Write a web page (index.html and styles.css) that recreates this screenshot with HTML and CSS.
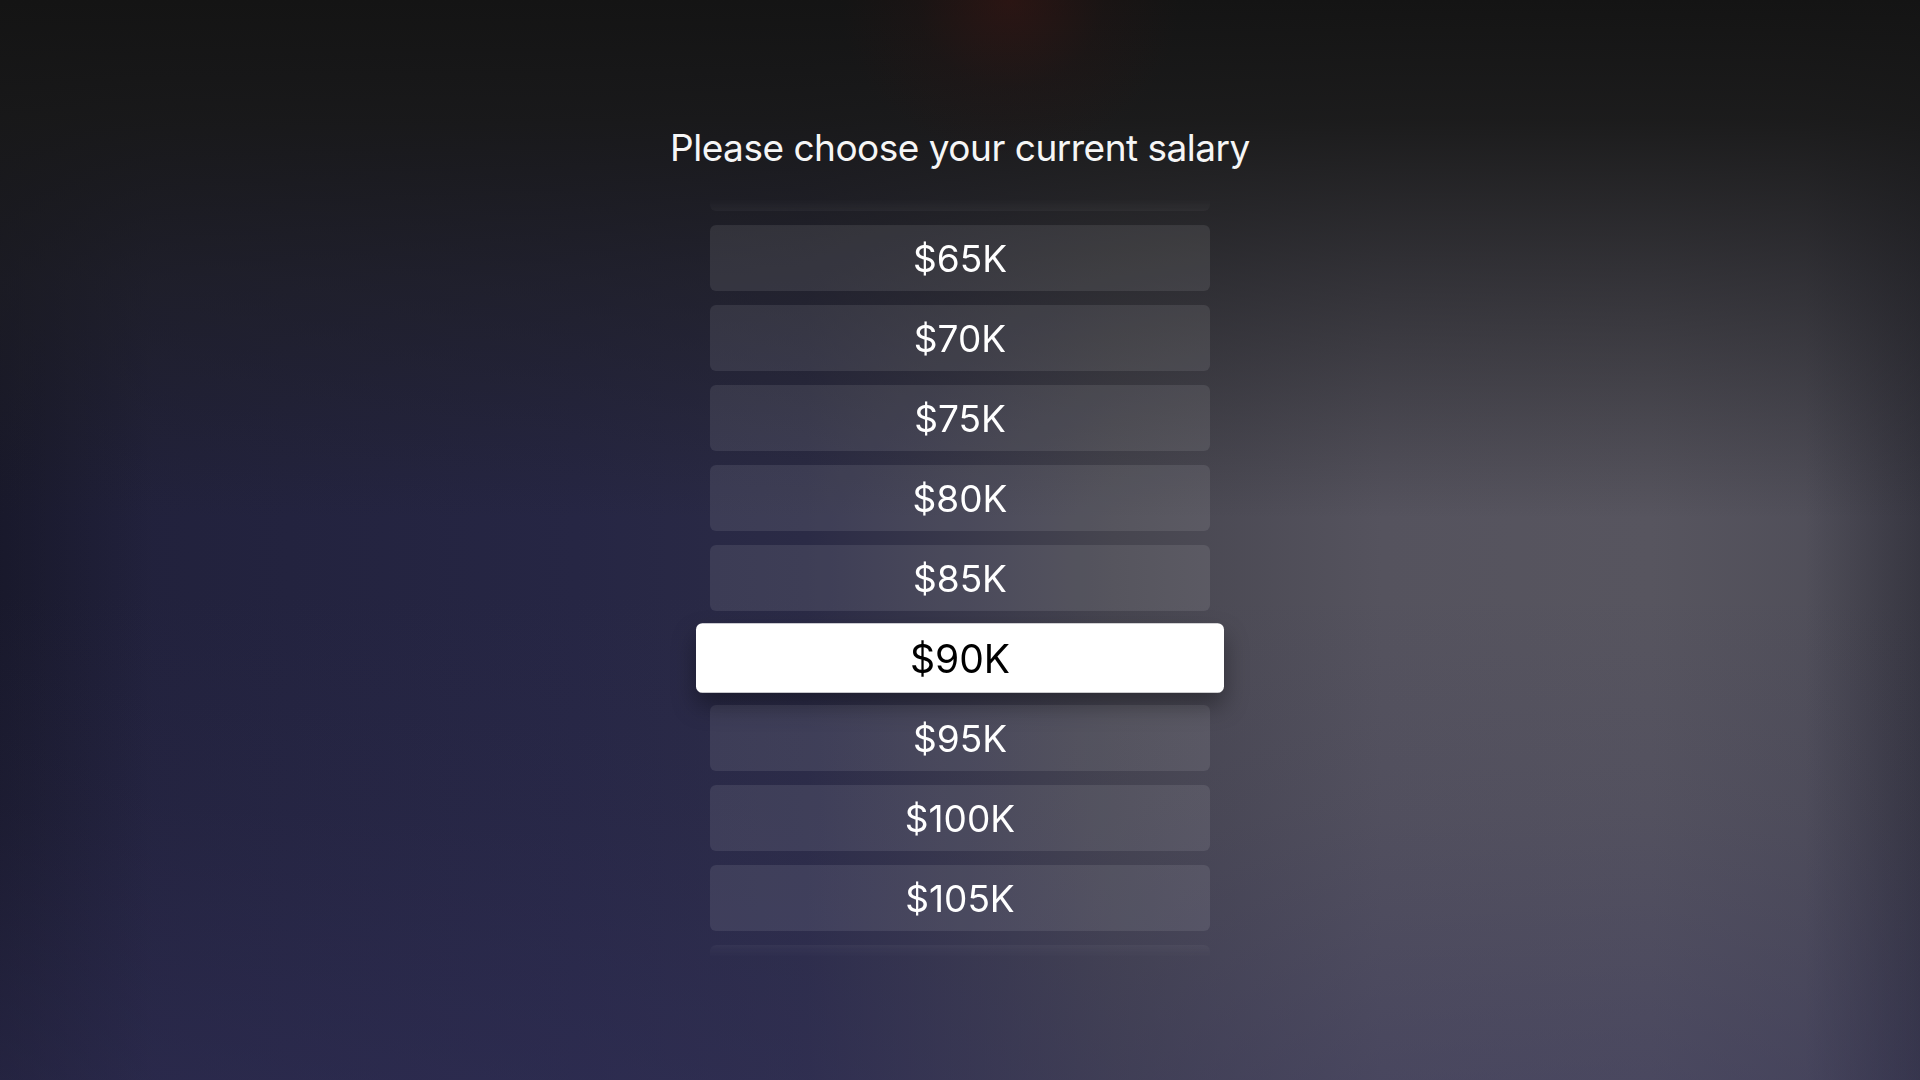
FILE: index.html
```html
<!DOCTYPE html>
<html lang="en">
<head>
    <meta charset="UTF-8">
    <meta name="viewport" content="width=device-width, initial-scale=1.0">
    <title>Salary Picker</title>
    <link rel="stylesheet" href="styles.css">
</head>
<body>
    <div class="glow"></div>

    <!-- Salary Picker -->
    <main class="picker">
        <h1 class="picker-title">Please choose your current salary</h1>
        <div class="picker-window">
            <ul class="picker-list">
                <li class="option ghost"></li>
                <li class="option">$65K</li>
                <li class="option">$70K</li>
                <li class="option">$75K</li>
                <li class="option">$80K</li>
                <li class="option">$85K</li>
                <li class="option focused">$90K</li>
                <li class="option">$95K</li>
                <li class="option">$100K</li>
                <li class="option">$105K</li>
                <li class="option ghost"></li>
            </ul>
        </div>
    </main>
</body>
</html>
```

FILE: styles.css
```css
html, body {
    height: 100%;
}
body {
    margin: 0;
    padding: 0;
    overflow: hidden;
    color: #fff;
    font-family: 'Inter', 'Noto Sans', sans-serif;
    background:
        linear-gradient(to bottom, rgba(20, 20, 20, 1) 0%, rgba(24, 24, 24, 0.94) 11%, rgba(28, 28, 30, 0.6) 26%, rgba(30, 30, 40, 0) 48%),
        linear-gradient(to top, rgba(54, 52, 96, 0.4) 0%, rgba(54, 52, 96, 0.12) 25%, rgba(54, 52, 96, 0) 45%),
        linear-gradient(to right, rgba(16, 16, 26, 0.45) 0%, rgba(16, 16, 26, 0) 8%, rgba(16, 16, 26, 0) 94%, rgba(16, 16, 26, 0.35) 100%),
        linear-gradient(to right, #20203a 0%, #262644 30%, #2b2b46 42%, #46454f 58%, #55535e 72%, #57555f 86%, #4c4b56 100%);
}
.glow {
    position: absolute;
    top: -160px;
    left: 840px;
    width: 340px;
    height: 320px;
    border-radius: 50%;
    background: radial-gradient(closest-side, rgba(70, 22, 18, 0.45), rgba(50, 20, 18, 0.18) 55%, rgba(40, 20, 20, 0));
    pointer-events: none;
}
.picker {
    position: relative;
    padding-top: 124px;
    display: flex;
    flex-direction: column;
    align-items: center;
}
.picker-title {
    margin: 0 0 26px;
    font-size: 37px;
    line-height: 47px;
    font-weight: 400;
    color: #f6f6f6;
    letter-spacing: -0.5px;
}
.picker-window {
    width: 640px;
    height: 762px;
    overflow: hidden;
    -webkit-mask-image: linear-gradient(to bottom, transparent 0, rgba(0, 0, 0, 0.15) 6px, #000 30px, #000 calc(100% - 30px), rgba(0, 0, 0, 0.15) calc(100% - 6px), transparent 100%);
    mask-image: linear-gradient(to bottom, transparent 0, rgba(0, 0, 0, 0.15) 6px, #000 30px, #000 calc(100% - 30px), rgba(0, 0, 0, 0.15) calc(100% - 6px), transparent 100%);
}
.picker-list {
    list-style: none;
    margin: -52px 0 0;
    padding: 0;
    display: flex;
    flex-direction: column;
    align-items: center;
    gap: 14px;
}
.option {
    width: 500px;
    height: 66px;
    flex: none;
    display: flex;
    align-items: center;
    justify-content: center;
    border-radius: 6px;
    background: rgba(255, 255, 255, 0.09);
    font-size: 37px;
    color: #fff;
}
.option.focused {
    background: #fff;
    color: #000;
    transform: scale(1.056);
    box-shadow: 0 12px 22px rgba(0, 0, 0, 0.35);
}
```
